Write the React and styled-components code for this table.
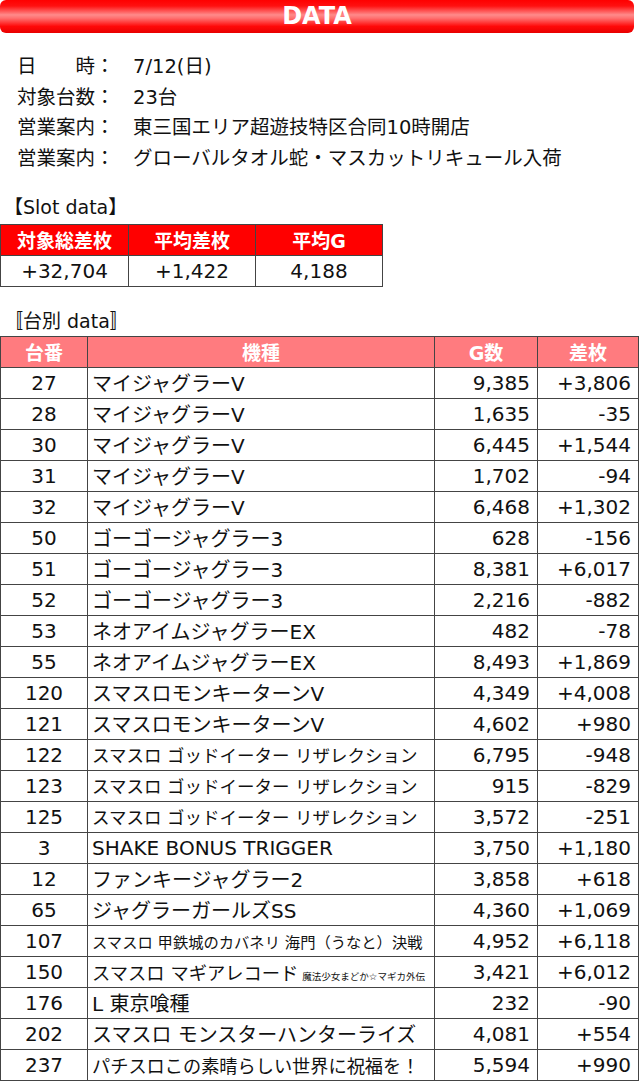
import React from 'react';
import styled, { createGlobalStyle } from 'styled-components';

const GlobalStyle = createGlobalStyle`
  body {
    margin: 0;
    background: #fff;
    font-family: "DejaVu Sans", "Noto Sans CJK JP", sans-serif;
    color: #111;
  }
`;

const Page = styled.div`
  width: 640px;
`;

const TitleBar = styled.div`
  width: 634px;
  height: 33px;
  border-radius: 6px;
  background: linear-gradient(
    to bottom,
    #ff0000 0%,
    #ff1010 18%,
    #ff8a8a 45%,
    #ff7070 55%,
    #ff0808 80%,
    #e80000 100%
  );
  color: #fff;
  font-weight: bold;
  font-size: 24px;
  line-height: 33px;
  text-align: center;
`;

const Info = styled.div`
  margin-top: 19px;
  padding-left: 17px;
  font-size: 19.5px;
`;

const InfoRow = styled.div`
  display: grid;
  grid-template-columns: 116px 1fr;
  height: 30.7px;
  line-height: 30.7px;
  white-space: nowrap;
`;

const SectionTitle = styled.div`
  margin-top: ${(p) => p.$top}px;
  margin-bottom: ${(p) => p.$bottom}px;
  padding-left: 4px;
  font-size: 19px;
  line-height: 30px;
`;

const Table = styled.table`
  border-collapse: collapse;
  table-layout: fixed;
  width: ${(p) => p.$width}px;
`;

const Th = styled.th`
  height: 30px;
  padding: 0;
  border: 1px solid #444;
  background: ${(p) => p.$bg};
  color: #fff;
  font-weight: bold;
  font-size: 19px;
  text-align: center;
`;

const Td = styled.td`
  height: 30px;
  padding: 0 ${(p) => (p.$align === 'right' ? 7 : 4)}px 0 4px;
  border: 1px solid #444;
  font-size: ${(p) => p.$size || 20}px;
  text-align: ${(p) => p.$align || 'left'};
  white-space: nowrap;
  overflow: hidden;
`;

const Sub = styled.span`
  font-size: 9.5px;
  margin-left: 4px;
`;

const info = [
  ['日　　時：', '7/12(日)'],
  ['対象台数：', '23台'],
  ['営業案内：', '東三国エリア超遊技特区合同10時開店'],
  ['営業案内：', 'グローバルタオル蛇・マスカットリキュール入荷'],
];

const rows = [
  ['27', 'マイジャグラーV', '9,385', '+3,806'],
  ['28', 'マイジャグラーV', '1,635', '-35'],
  ['30', 'マイジャグラーV', '6,445', '+1,544'],
  ['31', 'マイジャグラーV', '1,702', '-94'],
  ['32', 'マイジャグラーV', '6,468', '+1,302'],
  ['50', 'ゴーゴージャグラー3', '628', '-156'],
  ['51', 'ゴーゴージャグラー3', '8,381', '+6,017'],
  ['52', 'ゴーゴージャグラー3', '2,216', '-882'],
  ['53', 'ネオアイムジャグラーEX', '482', '-78'],
  ['55', 'ネオアイムジャグラーEX', '8,493', '+1,869'],
  ['120', 'スマスロモンキーターンV', '4,349', '+4,008'],
  ['121', 'スマスロモンキーターンV', '4,602', '+980'],
  ['122', 'スマスロ ゴッドイーター リザレクション', '6,795', '-948', 17.5],
  ['123', 'スマスロ ゴッドイーター リザレクション', '915', '-829', 17.5],
  ['125', 'スマスロ ゴッドイーター リザレクション', '3,572', '-251', 17.5],
  ['3', 'SHAKE BONUS TRIGGER', '3,750', '+1,180'],
  ['12', 'ファンキージャグラー2', '3,858', '+618'],
  ['65', 'ジャグラーガールズSS', '4,360', '+1,069'],
  ['107', 'スマスロ 甲鉄城のカバネリ 海門（うなと）決戦', '4,952', '+6,118', 15.3],
  ['150', 'スマスロ マギアレコード', '3,421', '+6,012', 18.3, '魔法少女まどか☆マギカ外伝'],
  ['176', 'L 東京喰種', '232', '-90'],
  ['202', 'スマスロ モンスターハンターライズ', '4,081', '+554'],
  ['237', 'パチスロこの素晴らしい世界に祝福を！', '5,594', '+990', 18.2],
];

export default function App() {
  return (
    <Page>
      <GlobalStyle />
      <TitleBar>DATA</TitleBar>

      <Info>
        {info.map(([label, value], i) => (
          <InfoRow key={i}>
            <span>{label}</span>
            <span>{value}</span>
          </InfoRow>
        ))}
      </Info>

      <SectionTitle $top={17} $bottom={2}>【Slot data】</SectionTitle>
      <Table $width={382}>
        <colgroup>
          <col style={{ width: 128 }} />
          <col style={{ width: 127 }} />
          <col style={{ width: 127 }} />
        </colgroup>
        <thead>
          <tr>
            <Th $bg="#ff0000">対象総差枚</Th>
            <Th $bg="#ff0000">平均差枚</Th>
            <Th $bg="#ff0000">平均G</Th>
          </tr>
        </thead>
        <tbody>
          <tr>
            <Td $align="center">+32,704</Td>
            <Td $align="center">+1,422</Td>
            <Td $align="center">4,188</Td>
          </tr>
        </tbody>
      </Table>

      <SectionTitle $top={19} $bottom={0}>〚台別 data〛</SectionTitle>
      <Table $width={638}>
        <colgroup>
          <col style={{ width: 87 }} />
          <col style={{ width: 347 }} />
          <col style={{ width: 103 }} />
          <col style={{ width: 101 }} />
        </colgroup>
        <thead>
          <tr>
            <Th $bg="#ff7b7f">台番</Th>
            <Th $bg="#ff7b7f">機種</Th>
            <Th $bg="#ff7b7f">G数</Th>
            <Th $bg="#ff7b7f">差枚</Th>
          </tr>
        </thead>
        <tbody>
          {rows.map(([no, name, g, diff, size, sub]) => (
            <tr key={no}>
              <Td $align="center">{no}</Td>
              <Td $size={size}>
                {name}
                {sub && <Sub>{sub}</Sub>}
              </Td>
              <Td $align="right">{g}</Td>
              <Td $align="right">{diff}</Td>
            </tr>
          ))}
        </tbody>
      </Table>
    </Page>
  );
}
